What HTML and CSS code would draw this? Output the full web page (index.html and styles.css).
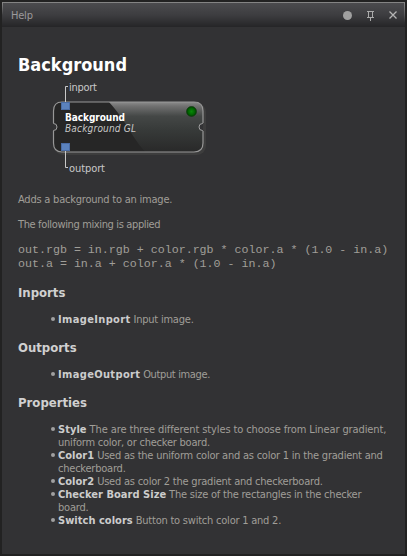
FILE: index.html
```
<!DOCTYPE html>
<html lang="en">
<head>
<meta charset="utf-8">
<title>Help</title>
<link rel="stylesheet" href="styles.css">
</head>
<body>
<div class="panel">
  <header class="bar">
    <span class="bar-title">Help</span>
    <svg class="tools" width="60" height="16" viewBox="0 0 60 16">
      <circle cx="5.500" cy="8.500" r="4.500" fill="#a0a0a0"/>
      <path d="M25 4.500h7M26.500 5v5M30.500 5v5M25 10.500h7M28.500 11v3" fill="none" stroke="#aaa"/>
      <path d="M47.500 4.500l7 7M54.500 4.500l-7 7" fill="none" stroke="#b4b4b4" stroke-width="1.300"/>
    </svg>
  </header>
  <main class="content">
    <h1>Background</h1>
    <svg class="node" width="200" height="104" viewBox="18 76 200 104">
      <defs>
        <linearGradient id="gloss" x1="0" y1="0" x2="0" y2="1">
          <stop offset="0" stop-color="#8c8c8c"/><stop offset=".08" stop-color="#717171"/><stop offset=".28" stop-color="#444746"/><stop offset=".55" stop-color="#373a39"/><stop offset="1" stop-color="#282828"/>
        </linearGradient>
        <radialGradient id="led"><stop offset="0" stop-color="#078a07"/><stop offset=".7" stop-color="#006000"/><stop offset="1" stop-color="#003800"/></radialGradient>
        <clipPath id="box"><rect x="53" y="102" width="150" height="50" rx="8"/></clipPath>
      </defs>
      <rect x="54" y="103" width="152" height="52" rx="9" fill="#3d3d3d"/>
      <rect x="53" y="102" width="150" height="50" rx="8" fill="#262626"/>
      <g clip-path="url(#box)">
        <path d="M109 102H204V153H147C135 143 125 119 109 102Z" fill="url(#gloss)"/>
        <circle cx="53.500" cy="127" r="3.500" fill="#333335" stroke="#a0a0a0"/>
        <circle cx="202.500" cy="127" r="3.500" fill="#333335" stroke="#a0a0a0"/>
      </g>
      <path d="M53.500 123V111Q53.500 102 62 102H194Q203 102 203 111V123M203 131V143Q203 152 194 152H62Q53.500 152 53.500 143V131" fill="none" stroke="#979797" stroke-width="1.200"/>
      <path d="M65.500 102V86.500H68M65.500 151V167.500H68" fill="none" stroke="#c8c8c8"/>
      <rect x="61.500" y="102.500" width="8" height="7" fill="#5b82bd" stroke="#4a6ca4"/>
      <rect x="61.500" y="143.500" width="8" height="7" fill="#5b82bd" stroke="#4a6ca4"/>
      <circle cx="191.500" cy="111.500" r="5" fill="url(#led)" stroke="#123d12" stroke-width=".7"/>
      <g class="node-text">
        <text x="69" y="91" textLength="28">inport</text>
        <text x="69" y="172" textLength="36">outport</text>
        <text class="node-name" x="65" y="121" textLength="60">Background</text>
        <text class="node-type" x="65" y="132" textLength="71">Background GL</text>
      </g>
    </svg>
    <p class="lead">Adds a background to an image.</p>
    <p class="tight">The following mixing is applied</p>
    <pre>out.rgb = in.rgb + color.rgb * color.a * (1.0 - in.a)
out.a = in.a + color.a * (1.0 - in.a)</pre>
    <h2>Inports</h2>
    <ul><li><b class="wide">ImageInport</b> Input image.</li></ul>
    <h2>Outports</h2>
    <ul><li class="tight"><b class="wide">ImageOutport</b> Output image.</li></ul>
    <h2>Properties</h2>
    <ul>
      <li class="loose"><b>Style</b> The are three different styles to choose from Linear gradient,<br><span class="normal">uniform color, or checker board.</span></li>
      <li><b>Color1</b> Used as the uniform color and as color 1 in the gradient and<br>checkerboard.</li>
      <li><b>Color2</b> Used as color 2 the gradient and checkerboard.</li>
      <li><b>Checker Board Size</b> The size of the rectangles in the checker<br>board.</li>
      <li><b>Switch colors</b> Button to switch color 1 and 2.</li>
    </ul>
  </main>
</div>
</body>
</html>
```
FILE: styles.css
```
* { box-sizing: border-box; }
body {
  margin: 0;
  padding: 2px;
  height: 556px;
  overflow: hidden;
  background: #222;
  color: #a09e98;
  font: 11px/13px "DejaVu Sans Condensed", "DejaVu Sans", sans-serif;
  font-stretch: condensed;
  letter-spacing: -0.22px;
}
.panel { width: 403px; height: 552px; background: #323234; }
.bar {
  display: flex;
  justify-content: space-between;
  height: 25px;
  padding: 4px 3px 0 9px;
  border-top: 1px solid #848484;
  background:
    linear-gradient(#848484, transparent 50%) left / 1px 100% no-repeat,
    linear-gradient(#848484, transparent 80%) right / 1px 100% no-repeat,
    linear-gradient(#4b4b4e, #3d3d40 50%, #252527);
}
.bar-title { padding-top: 1px; line-height: 15px; color: #9b999b; }
.tools { display: block; }
.content { padding: 26px 10px 0 16px; }
h1 {
  margin: 0;
  height: 23px;
  font-size: 18px;
  line-height: 24px;
  letter-spacing: 0;
  color: #fff;
}
.node { display: block; }
.node-text { fill: #c8c8c8; font-size: 11px; letter-spacing: 0; }
.node-text .node-name { fill: #fff; font-size: 10px; font-weight: bold; }
.node-text .node-type { font-size: 10px; font-style: italic; }
p { margin: 0 0 12px; }
.lead { margin-top: 13px; }
.tight { letter-spacing: -0.36px; }
.normal { letter-spacing: -0.22px; }
pre {
  margin: 0;
  font: 11.65px/14px "Liberation Mono", monospace;
  letter-spacing: 0;
}
h2 {
  margin: 14px 0 13px;
  font-size: 13px;
  line-height: 15px;
  letter-spacing: 0;
  color: #d0d0d0;
}
ul { margin: 0; padding: 0 0 0 40px; list-style: none; }
li { position: relative; white-space: nowrap; }
.loose { letter-spacing: -0.11px; }
li::before {
  content: "";
  position: absolute;
  left: -7px;
  top: 4px;
  width: 4px;
  height: 4px;
  border-radius: 50%;
  background: #a0a0a0;
}
b { color: #ccc; letter-spacing: 0.03px; }
.wide { letter-spacing: 0.35px; }
```
